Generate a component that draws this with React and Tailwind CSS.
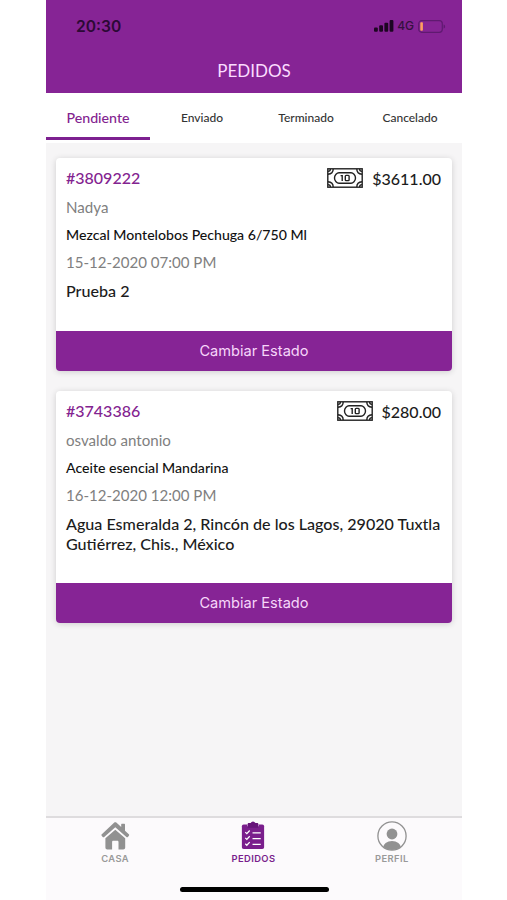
const orders = [
  {
    id: "3809222",
    total: "$3611.00",
    customer: "Nadya",
    product: "Mezcal Montelobos Pechuga 6/750 Ml",
    date: "15-12-2020 07:00 PM",
    address: "Prueba 2",
  },
  {
    id: "3743386",
    total: "$280.00",
    customer: "osvaldo antonio",
    product: "Aceite esencial Mandarina",
    date: "16-12-2020 12:00 PM",
    address: "Agua Esmeralda 2, Rincón de los Lagos, 29020 Tuxtla Gutiérrez, Chis., México",
  },
];

const tabs = ["Pendiente", "Enviado", "Terminado", "Cancelado"];

const SignalIcon = () => (
  <svg width="20" height="12" viewBox="0 0 20 12" fill="#1d0622">
    <rect x="0" y="7.5" width="3.8" height="4.2" rx="1" />
    <rect x="5.2" y="5.2" width="3.8" height="6.5" rx="1" />
    <rect x="10.4" y="2.7" width="3.8" height="9" rx="1" />
    <rect x="15.6" y="0" width="3.8" height="11.7" rx="1" />
  </svg>
);

const BatteryIcon = () => (
  <svg width="28" height="13" viewBox="0 0 28 13" fill="none">
    <rect x="0.7" y="0.7" width="23.6" height="11.6" rx="3" stroke="#5f1a70" strokeWidth="1.2" />
    <rect x="2.3" y="2.3" width="2.6" height="8.4" rx="0.8" fill="#ffa05f" />
    <path d="M25.6 4.4v4.2c1-.4 1.5-1.2 1.5-2.1s-.5-1.7-1.5-2.1z" fill="#5f1a70" />
  </svg>
);

const CashIcon = () => (
  <svg width="36" height="20" viewBox="0 0 36 20" fill="none" stroke="#222" strokeWidth="1.4">
    <rect x="0.8" y="0.8" width="34.4" height="18.4" />
    <path d="M1 6.2C4.2 6 6.2 4 6.2 1M1 3.4C2.6 3.3 3.4 2.5 3.4 1" />
    <path d="M35 6.2C31.8 6 29.8 4 29.8 1M35 3.4C33.4 3.3 32.6 2.5 32.6 1" />
    <path d="M1 13.8C4.2 14 6.2 16 6.2 19M1 16.6C2.6 16.7 3.4 17.5 3.4 19" />
    <path d="M35 13.8C31.8 14 29.8 16 29.8 19M35 16.6C33.4 16.7 32.6 17.5 32.6 19" />
    <path d="M12 4.8h12c2 0 4.5 2.2 4.5 5.2s-2.5 5.2-4.5 5.2H12c-2 0-4.5-2.2-4.5-5.2s2.5-5.2 4.5-5.2z" />
    <path d="M13.6 7.6h1.6v5.4" />
    <rect x="18.3" y="7.4" width="3.8" height="5.2" rx="0.8" />
  </svg>
);

const HomeIcon = () => (
  <svg width="30" height="28" viewBox="0 0 30 28" fill="#919191">
    <path d="M14.3.6c.5-.5 1.5-.5 2 0l4.9 4.4V2.4c0-.4.2-.6.6-.6h2.6c.4 0 .6.2.6.6v6.4l3.8 3.4c.5.4.5 1 .1 1.5l-1 1.2c-.4.5-1 .5-1.5.1L15.3 5.3 4.2 15c-.5.4-1.1.4-1.5-.1l-1-1.2c-.4-.5-.4-1.1.1-1.5z" />
    <path d="M15.3 7.8l9.9 8.5v9.1c0 1.2-.8 2-2 2h-4.7v-7.4c0-.7-.5-1.2-1.2-1.2h-4c-.7 0-1.2.5-1.2 1.2v7.4H7.4c-1.2 0-2-.8-2-2v-9.1z" />
  </svg>
);

const OrdersIcon = () => (
  <svg width="24" height="29" viewBox="0 0 24 30" fill="none">
    <path
      d="M2.5 3.5h19c1.4 0 2 .8 2 2v21.5c0 1.2-.6 2-2 2h-19c-1.4 0-2-.8-2-2V5.500c0-1.200.6-2 2-2z"
      fill="#7a1e8c"
    />
    <path d="M6.5 7V3.2c0-.8.4-1.2 1.2-1.2h1.9a2.6 2.6 0 0 1 4.8 0h1.9c.8 0 1.2.4 1.2 1.2V7z" fill="#67147a" />
    <path d="M6.3 3.5V5.5M17.7 5.5V3.5" stroke="#e0c0e6" strokeWidth="0.6" />
    <path d="M4 11.5l1.6 1.6 3-3.3M4 17.5l1.6 1.6 3-3.3M4 23.5l1.6 1.6 3-3.3" stroke="#fff" strokeWidth="1.3" />
    <path d="M11.5 12.2h8.5M11.5 18.2h8.5M11.5 24.2h8.5" stroke="#fff" strokeWidth="1.3" />
  </svg>
);

const ProfileIcon = () => (
  <svg width="30" height="30" viewBox="0 0 30 30">
    <defs>
      <clipPath id="avatar">
        <circle cx="15" cy="15" r="14" />
      </clipPath>
    </defs>
    <circle cx="15" cy="15" r="14.1" fill="none" stroke="#919191" strokeWidth="1.3" />
    <circle cx="15" cy="13" r="5.4" fill="#919191" />
    <ellipse cx="15" cy="27" rx="9" ry="7" fill="#919191" clipPath="url(#avatar)" />
  </svg>
);

const OrderCard = ({ order }) => {
  return (
    <div className="bg-white rounded shadow-[0_1px_6px_rgba(0,0,0,0.16)] overflow-hidden">
      <div className="pl-[10px] pr-[11px] pt-[10px] pb-[30px]">
        <div className="flex items-center justify-between h-5">
          <h2 className="text-[16px] leading-5 font-medium text-[#832390]">#{order.id}</h2>
          <div className="flex items-center gap-[9px]">
            <CashIcon />
            <span className="text-[16px] leading-5 font-medium text-[#1c1c1c] pt-0.5">{order.total}</span>
          </div>
        </div>
        <p className="mt-[10px] text-[15.1px] leading-[18px] text-[#808080]">{order.customer}</p>
        <p className="mt-[10px] text-[14.1px] leading-[18px] font-medium text-[#111]">{order.product}</p>
        <p className="mt-[9px] text-[15.05px] leading-[18px] text-[#808080]">{order.date}</p>
        <p className="mt-[10px] -mr-1 text-[16.1px] leading-[19.5px] font-medium text-[#1c1c1c]">{order.address}</p>
      </div>
      <button className="block w-full h-10 pt-[2px] bg-[#862495] text-[#f6d6fa] font-[Inter] text-[14.6px]">
        Cambiar Estado
      </button>
    </div>
  );
};

const NavItem = ({ icon, label, active }) => (
  <div className="flex-1 flex flex-col items-center pt-[2px]">
    <div className="h-[31px] flex items-center">{icon}</div>
    <span
      className={`mt-0.5 font-[Inter] text-[9.4px] leading-3 font-semibold tracking-[0.4px] ${
        active ? "text-[#7a1e8c]" : "text-[#999]"
      }`}
    >
      {label}
    </span>
  </div>
);

export default function App() {
  return (
    <div className="bg-white h-[900px] pl-[46px] font-[Lato,sans-serif]">
      <div className="w-[416px] h-full flex flex-col bg-[#f6f5f6]">
        <header className="h-[93px] bg-[#862495]">
          <div className="flex items-center justify-between h-[52px] pl-[30px] pr-4">
            <span className="pt-px font-[Inter] text-[15.6px] font-semibold text-[#2c0935]">20:30</span>
            <div className="flex items-center">
              <SignalIcon />
              <span className="ml-[3px] mr-[4px] font-[Inter] text-[12px] font-medium text-[#35103f]">4G</span>
              <BatteryIcon />
            </div>
          </div>
          <h1 className="text-center text-[17px] leading-[38px] text-[#fbdcff]">PEDIDOS</h1>
        </header>

        <nav className="flex h-[50px] bg-white">
          {tabs.map((tab, index) => (
            <button
              key={tab}
              className={
                index === 0
                  ? "w-1/4 h-[47px] border-b-[3px] border-[#7d2090] text-[14.2px] pt-[5px] font-medium text-[#832390]"
                  : "w-1/4 h-[50px] text-[12px] font-medium text-[#333]"
              }
            >
              {tab}
            </button>
          ))}
        </nav>

        <main className="flex-1 px-[10px] pt-[15px] space-y-[20.5px]">
          {orders.map((order) => (
            <OrderCard key={order.id} order={order} />
          ))}
        </main>

        <footer className="h-[84px] bg-[#fcfafc] border-t-2 border-[#dedcde] flex flex-col justify-between">
          <div className="flex pr-px">
            <NavItem icon={<HomeIcon />} label="CASA" />
            <NavItem icon={<OrdersIcon />} label="PEDIDOS" active />
            <NavItem icon={<ProfileIcon />} label="PERFIL" />
          </div>
          <div className="w-[149px] h-[5px] mb-2 mx-auto rounded-full bg-black" />
        </footer>
      </div>
    </div>
  );
}
